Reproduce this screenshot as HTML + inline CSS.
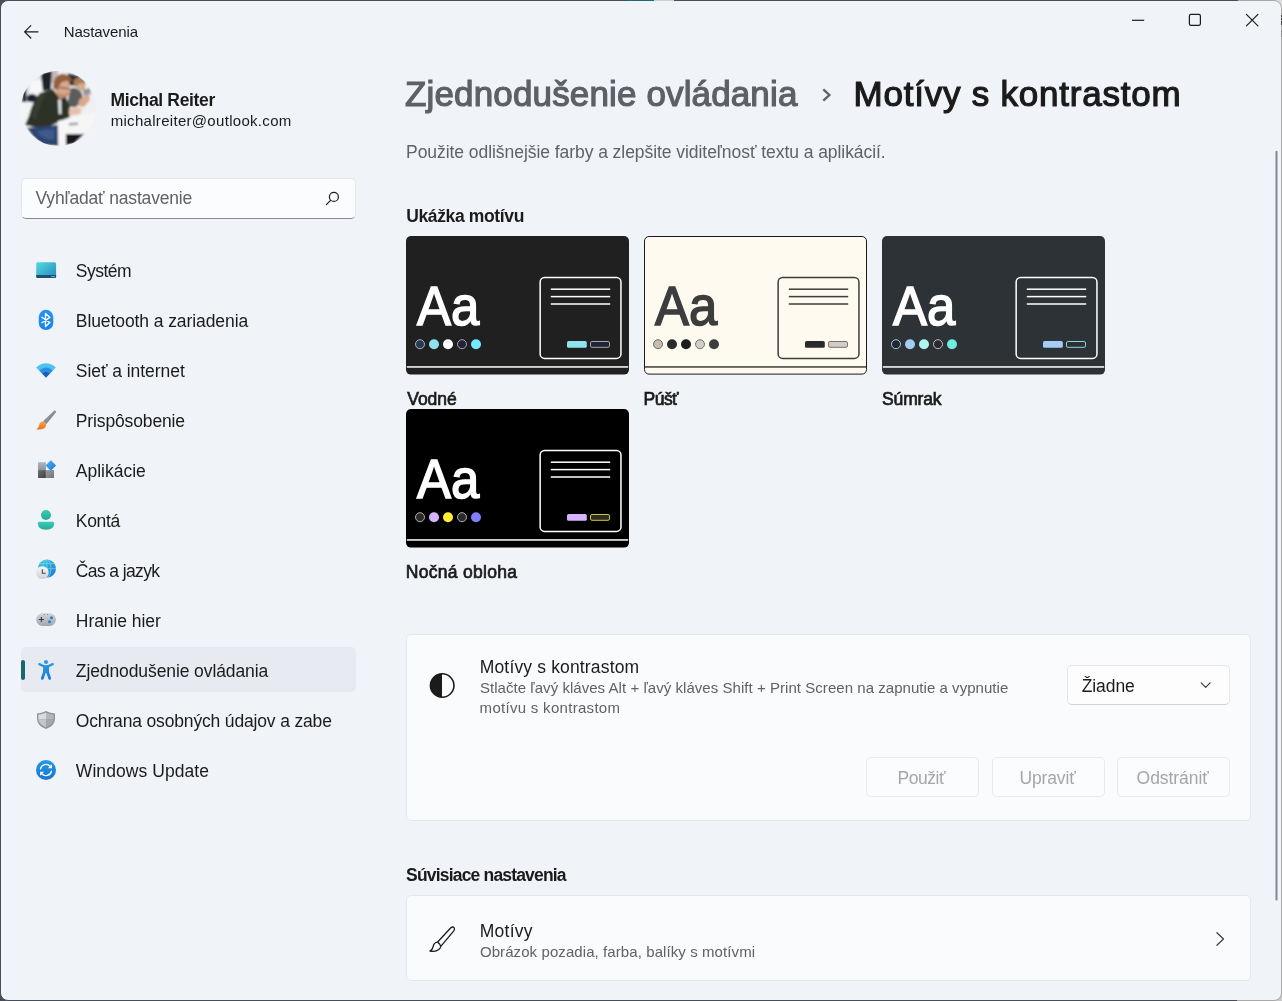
<!DOCTYPE html>
<html lang="sk"><head><meta charset="utf-8"><title>Nastavenia</title>
<style>
html,body{margin:0;padding:0;}
body{width:1282px;height:1001px;overflow:hidden;background:#474d59;position:relative;font-family:"Liberation Sans",sans-serif;}
.win{position:absolute;left:0;top:0;width:1280px;height:999px;border:1px solid #474d59;border-radius:8px;background:#f0f3f8;}
#root{position:absolute;left:0;top:0;width:1282px;height:1001px;will-change:transform;}
.t{position:absolute;white-space:nowrap;line-height:1;display:block;}
.a{position:absolute;display:block;}
.card{position:absolute;box-sizing:border-box;background:#fafbfd;border:1px solid #e4e7ec;border-radius:5px;}
.btn{position:absolute;box-sizing:border-box;background:#fbfcfd;border:1px solid #e8eaed;border-radius:5px;}
svg{position:absolute;overflow:visible;}
</style></head><body>
<div class="a" style="left:1272px;top:0;width:10px;height:10px;background:#dcdcdc"></div>
<div class="a" style="left:1272px;top:991px;width:10px;height:10px;background:#c9c9c9"></div>
<div class="win" style="clip-path:inset(0 22px 0 0)"></div>
<div class="win" style="border-color:#a9a9a9;clip-path:inset(0 0 0 1260px)"></div>
<div class="a" style="left:1238px;top:0;width:23px;height:1px;background:#a9a9a9"></div>
<div class="a" style="left:627px;top:0;width:27px;height:1px;background:#1d6a77"></div>
<div class="a" style="left:654px;top:0;width:20px;height:1px;background:#cfcfcf"></div>
<div class="a" style="left:1237px;top:1000px;width:24px;height:1px;background:#a9a9a9"></div>
<div class="a" style="left:1281px;top:15px;width:1px;height:2px;background:#3a3a3a"></div>
<div class="a" style="left:1281px;top:18px;width:1px;height:2px;background:#3a3a3a"></div>
<div class="a" style="left:1281px;top:21px;width:1px;height:4px;background:#3a3a3a"></div>
<div class="a" style="left:1281px;top:30px;width:1px;height:7px;background:#8a8a8a"></div>
<div id="root">
<svg style="left:20px;top:20px" width="24" height="24" viewBox="20 20 24 24"><path d="M38 31.8H24.6M30.8 25.6L24.6 31.8L30.8 38" fill="none" stroke="#1b1b1b" stroke-width="1.2" stroke-linecap="round" stroke-linejoin="round"/></svg>
<span class="t" style="left:63.65px;top:24.00px;font-size:15px;color:#1b1b1b;letter-spacing:-0.057px;">Nastavenia</span>
<svg style="left:1120px;top:8px" width="150" height="24" viewBox="1120 8 150 24" fill="none" stroke="#1b1b1b" stroke-width="1.2">
<path d="M1132 20.3H1144.2"/>
<rect x="1189.4" y="14.4" width="11" height="11" rx="1.6"/>
<path d="M1246.4 14.3L1257.9 25.8M1257.9 14.3L1246.4 25.8" stroke-linecap="round"/>
</svg>
<svg style="left:10px;top:60px" width="100" height="100" viewBox="0 0 1001 1001">
<defs><clipPath id="av"><circle cx="485" cy="484" r="377"/></clipPath>
<filter id="bl" x="-5%" y="-5%" width="110%" height="110%"><feGaussianBlur stdDeviation="9"/></filter></defs>
<g clip-path="url(#av)"><g filter="url(#bl)">
<rect x="80" y="80" width="820" height="820" fill="#eef0f3"/>
<rect x="100" y="100" width="250" height="330" fill="#e3e6ea"/>
<rect x="200" y="200" width="130" height="200" fill="#f7f7f7"/>
<path d="M310 150Q330 110 420 110L410 300L330 310Z" fill="#1d212b"/>
<rect x="420" y="100" width="60" height="130" fill="#c9b9b6"/>
<path d="M120 300L165 280L165 420L120 420Z" fill="#20242c"/>
<ellipse cx="220" cy="385" rx="52" ry="45" fill="#1b2030"/>
<path d="M100 440Q180 410 260 425L200 640L100 640Z" fill="#f3f4f6"/>
<path d="M580 130L700 160L640 260L590 250Z" fill="#2a2d35"/>
<ellipse cx="695" cy="225" rx="60" ry="52" fill="#a87d58"/>
<ellipse cx="715" cy="270" rx="40" ry="40" fill="#d8ab8c"/>
<path d="M600 290Q650 250 720 330L730 400L660 470L570 470Z" fill="#5b5b5e"/>
<path d="M730 300L800 280L810 340L740 360Z" fill="#8d939e"/>
<path d="M690 400L790 330L800 400L740 470L680 460Z" fill="#d9a98a"/>
<path d="M450 250Q470 170 570 195Q615 240 600 320Q585 385 510 385Q445 345 450 250Z" fill="#dba789"/>
<path d="M470 320Q520 360 590 330Q580 385 510 388Q470 365 470 320Z" fill="#c48a6c"/>
<path d="M432 285Q425 180 500 142Q580 118 622 205L598 218Q545 198 505 232L482 300Z" fill="#93603d"/>
<path d="M500 268L597 282L594 295L500 283Z" fill="#6b5a66"/>
<path d="M430 290L300 330Q230 400 190 560L150 650L340 690L600 570L590 520L600 470L560 370L500 390Z" fill="#2d3228"/>
<path d="M300 340Q250 420 215 560L260 600Q290 450 360 350Z" fill="#383e31"/>
<path d="M482 395L512 395L515 540L488 540Z" fill="#e9edf2"/>
<path d="M590 500Q650 450 720 490L700 540L600 555Z" fill="#e6bfa8"/>
<path d="M170 680L480 650L485 860L330 850Q220 770 170 680Z" fill="#2c456e"/>
<path d="M260 720Q360 680 450 700L440 800Q340 800 260 720Z" fill="#3c5a8a"/>
<path d="M480 610L860 520L870 700L800 720L560 740L540 870L485 860Z" fill="#f6f6f6"/>
<path d="M560 740L740 740L640 840L560 850Z" fill="#14161b"/>
<path d="M590 630L680 625L680 650L590 655Z" fill="#9a9da2"/>
</g></g></svg>
<span class="t" style="left:110.51px;top:92.00px;font-size:17.5px;color:#1b1b1b;letter-spacing:-0.350px;font-weight:700;">Michal Reiter</span>
<span class="t" style="left:110.70px;top:113.00px;font-size:15px;color:#1b1b1b;letter-spacing:0.303px;">michalreiter@outlook.com</span>
<div class="a" style="left:21px;top:178px;width:335px;height:41px;box-sizing:border-box;background:#fbfcfe;border:1px solid #e3e6eb;border-bottom:1.5px solid #85888e;border-radius:5px;"></div>
<span class="t" style="left:35.44px;top:190.00px;font-size:17.5px;color:#5f6266;letter-spacing:-0.167px;">Vyhľadať nastavenie</span>
<svg style="left:323px;top:188px" width="20" height="20" viewBox="323 188 20 20" fill="none" stroke="#1b1b1b" stroke-width="1.2" stroke-linecap="round"><circle cx="333.9" cy="196.9" r="4.5"/><path d="M330.6 200.3L326.3 204.6"/></svg>
<div class="a" style="left:21px;top:647px;width:335px;height:45px;border-radius:5px;background:#e7eaf0"></div>
<div class="a" style="left:21px;top:660px;width:4px;height:20px;border-radius:2px;background:#1b6472"></div>
<span class="t" style="left:75.80px;top:263.00px;font-size:17.5px;color:#1b1b1b;letter-spacing:-0.497px;">Systém</span>
<span class="t" style="left:75.80px;top:313.00px;font-size:17.5px;color:#1b1b1b;letter-spacing:-0.085px;">Bluetooth a zariadenia</span>
<span class="t" style="left:75.80px;top:363.00px;font-size:17.5px;color:#1b1b1b;letter-spacing:-0.047px;">Sieť a internet</span>
<span class="t" style="left:75.80px;top:413.00px;font-size:17.5px;color:#1b1b1b;letter-spacing:-0.135px;">Prispôsobenie</span>
<span class="t" style="left:75.80px;top:463.00px;font-size:17.5px;color:#1b1b1b;letter-spacing:-0.006px;">Aplikácie</span>
<span class="t" style="left:75.80px;top:513.00px;font-size:17.5px;color:#1b1b1b;letter-spacing:-0.337px;">Kontá</span>
<span class="t" style="left:75.80px;top:563.00px;font-size:17.5px;color:#1b1b1b;letter-spacing:-0.624px;">Čas a jazyk</span>
<span class="t" style="left:75.80px;top:613.00px;font-size:17.5px;color:#1b1b1b;letter-spacing:-0.051px;">Hranie hier</span>
<span class="t" style="left:75.80px;top:663.00px;font-size:17.5px;color:#1b1b1b;letter-spacing:-0.097px;">Zjednodušenie ovládania</span>
<span class="t" style="left:75.80px;top:713.00px;font-size:17.5px;color:#1b1b1b;letter-spacing:-0.160px;">Ochrana osobných údajov a zabe</span>
<span class="t" style="left:75.80px;top:763.00px;font-size:17.5px;color:#1b1b1b;letter-spacing:0.069px;">Windows Update</span>
<svg style="left:34px;top:258px" width="24" height="24" viewBox="0 0 24 24"><defs><linearGradient id="gs" x1="0" y1="0" x2="1" y2="1"><stop offset="0" stop-color="#52dce0"/><stop offset="1" stop-color="#2787bd"/></linearGradient></defs><rect x="2.2" y="4.2" width="19.9" height="15.8" rx="1.6" fill="url(#gs)"/><path d="M2.2 16.9H22.1V18.4Q22.1 20 20.5 20H3.8Q2.2 20 2.2 18.4Z" fill="#1b5272"/><rect x="17.4" y="18" width="1.1" height="1.1" fill="#b5e8f2"/><rect x="19.4" y="18" width="1.1" height="1.1" fill="#b5e8f2"/></svg>
<svg style="left:34px;top:308px" width="24" height="24" viewBox="0 0 24 24"><defs><linearGradient id="gb" x1="0" y1="0" x2="0" y2="1"><stop offset="0" stop-color="#2593f8"/><stop offset="1" stop-color="#1783f1"/></linearGradient></defs><rect x="4.75" y="1.8" width="14.55" height="20.25" rx="7.27" fill="url(#gb)"/><path d="M7.9 9.3L15.9 14.6L11.5 18.5V5.5L15.9 9.4L7.9 14.7" fill="none" stroke="#fff" stroke-width="1.35" stroke-linejoin="round" stroke-linecap="round"/></svg>
<svg style="left:34px;top:358px" width="24" height="24" viewBox="0 0 24 24"><path d="M12 19.4L2.2 9.4Q12 1 21.8 9.4Z" fill="#4cc2f1"/><path d="M12 19.4L5.2 12.5Q12 6.6 18.8 12.5Z" fill="#2d8fe3"/><path d="M12 19.4L8.2 15.5Q12 12.2 15.8 15.5Z" fill="#1a5fb4"/></svg>
<svg style="left:34px;top:408px" width="24" height="24" viewBox="0 0 24 24"><defs><linearGradient id="gp" x1="0" y1="0" x2="1" y2="1"><stop offset="0" stop-color="#a4a8ae"/><stop offset="1" stop-color="#6f737a"/></linearGradient><linearGradient id="gp2" x1="0" y1="0" x2="0" y2="1"><stop offset="0" stop-color="#f9a23a"/><stop offset="1" stop-color="#f0702a"/></linearGradient></defs><path d="M20.6 2.2Q22.4 2.6 21.8 4.4L12.2 16.2L9 13.2Z" fill="url(#gp)"/><path d="M9.2 13.2L12.2 16.2Q12 20.6 7.4 21.2Q4.4 21.8 2.2 21.2Q4.6 19.8 5 17.4Q5.6 13.8 9.2 13.2Z" fill="url(#gp2)"/></svg>
<svg style="left:34px;top:458px" width="24" height="24" viewBox="0 0 24 24"><defs><linearGradient id="ga" x1="0" y1="0" x2="1" y2="1"><stop offset="0" stop-color="#45b6fa"/><stop offset="1" stop-color="#1677d8"/></linearGradient><linearGradient id="ga1" x1="0" y1="0" x2="0" y2="1"><stop offset="0" stop-color="#b4b7bc"/><stop offset="1" stop-color="#8e9196"/></linearGradient><linearGradient id="ga2" x1="0" y1="0" x2="1" y2="1"><stop offset="0" stop-color="#6a6d72"/><stop offset="1" stop-color="#3f4246"/></linearGradient><linearGradient id="ga3" x1="0" y1="0" x2="1" y2="1"><stop offset="0" stop-color="#9a9da2"/><stop offset="1" stop-color="#6f7277"/></linearGradient></defs><rect x="4" y="4.2" width="7.9" height="7.9" fill="url(#ga1)"/><rect x="4" y="12.1" width="7.9" height="7.9" fill="url(#ga2)"/><rect x="11.9" y="12.1" width="8.1" height="7.9" fill="url(#ga3)"/><path d="M16.8 2.2L22.1 7.5L16.8 12.8L11.5 7.5Z" fill="url(#ga)"/></svg>
<svg style="left:34px;top:508px" width="24" height="24" viewBox="0 0 24 24"><defs><linearGradient id="gk" x1="0" y1="0" x2="0" y2="1"><stop offset="0" stop-color="#3ccbb3"/><stop offset="1" stop-color="#22aa9a"/></linearGradient></defs><circle cx="12" cy="7" r="5" fill="url(#gk)"/><path d="M5.4 13.7H18.6Q20.2 13.7 20.2 15.3Q20.2 21.8 12 21.8Q3.8 21.8 3.8 15.3Q3.8 13.7 5.4 13.7Z" fill="url(#gk)"/></svg>
<svg style="left:34px;top:558px" width="24" height="24" viewBox="0 0 24 24"><defs><linearGradient id="gt" x1="0" y1="0" x2="1" y2="1"><stop offset="0" stop-color="#3fd3e0"/><stop offset="1" stop-color="#1a70d2"/></linearGradient><linearGradient id="gt2" x1="0" y1="0" x2="0" y2="1"><stop offset="0" stop-color="#f7f7f7"/><stop offset="1" stop-color="#cfd0d2"/></linearGradient></defs><circle cx="12.9" cy="10.65" r="9.1" fill="url(#gt)"/><g fill="none" stroke="#7fe0ee" stroke-width=".8" opacity=".75"><ellipse cx="12.9" cy="10.65" rx="4" ry="9.1"/><path d="M3.8 10.65H22M5.4 5.6H20.4M12.9 1.6V19.6"/></g><circle cx="8.35" cy="14.6" r="6.4" fill="url(#gt2)"/><path d="M8.35 11.2V15.2H11.6" fill="none" stroke="#4a4a4c" stroke-width="1.1"/></svg>
<svg style="left:34px;top:608px" width="24" height="24" viewBox="0 0 24 24"><defs><linearGradient id="gg" x1="0" y1="0" x2="0" y2="1"><stop offset="0" stop-color="#d2d5d9"/><stop offset="1" stop-color="#a3a7ad"/></linearGradient></defs><rect x="2.1" y="5.3" width="19.9" height="12.6" rx="6.3" fill="url(#gg)"/><path d="M4.8 11.5H10M7.4 8.9V14.1" stroke="#3f4246" stroke-width="1.15" fill="none"/><circle cx="17.5" cy="9.7" r="1.5" fill="#1f7fe0"/><circle cx="15.5" cy="13.7" r="1.5" fill="#1f7fe0"/><circle cx="10.6" cy="6.5" r=".45" fill="#55585d"/><circle cx="13.6" cy="6.5" r=".45" fill="#55585d"/></svg>
<svg style="left:34px;top:658px" width="24" height="24" viewBox="0 0 24 24"><defs><linearGradient id="gx" gradientUnits="userSpaceOnUse" x1="0" y1="2" x2="0" y2="22"><stop offset="0" stop-color="#2f9fe4"/><stop offset="1" stop-color="#167ad6"/></linearGradient></defs><g fill="url(#gx)" stroke="url(#gx)"><circle cx="12" cy="4" r="2.1" stroke="none"/><path d="M5.3 6.1L9.9 8.3H14.1L18.7 6.1" fill="none" stroke-width="2.3" stroke-linecap="round" stroke-linejoin="round"/><rect x="9.1" y="7.3" width="6" height="7.6" stroke="none"/><path d="M10.5 14L8.3 20.4M13.5 14L15.7 20.4" fill="none" stroke-width="2.8" stroke-linecap="round"/></g></svg>
<svg style="left:34px;top:708px" width="24" height="24" viewBox="0 0 24 24"><path d="M12 3Q16 5.3 21 5.6V10.4Q21 17.6 12 21Q3 17.6 3 10.4V5.6Q8 5.3 12 3Z" fill="#8e9297"/><path d="M12 4.5Q15.6 6.5 19.7 6.8V11.6H12Z" fill="#b3b6ba"/><path d="M12 4.5Q8.4 6.5 4.3 6.8V11.6H12Z" fill="#d9dbdd"/><path d="M4.3 11.6H12V19.5Q5 16.6 4.3 11.6Z" fill="#c3c5c8"/><path d="M19.7 11.6H12V19.5Q19 16.6 19.7 11.6Z" fill="#a4a7ac"/></svg>
<svg style="left:34px;top:758px" width="24" height="24" viewBox="0 0 24 24"><defs><linearGradient id="gu" x1="0" y1="0" x2="0" y2="1"><stop offset="0" stop-color="#2398e6"/><stop offset="1" stop-color="#1676d0"/></linearGradient></defs><circle cx="12" cy="12" r="10" fill="url(#gu)"/><g fill="none" stroke="#fff" stroke-width="1.35" stroke-linecap="round"><path d="M6.5 10.9A5.6 5.6 0 0 1 16.3 8.4"/><path d="M17.5 13.1A5.6 5.6 0 0 1 7.7 15.6"/></g><path d="M17.9 6.3V10.3H13.9Z" fill="#fff"/><path d="M6.1 17.7V13.7H10.1Z" fill="#fff"/></svg>
<span class="t" style="left:405.08px;top:76.00px;font-size:35px;color:#5d6065;letter-spacing:0.140px;-webkit-text-stroke:1.2px #5d6065;">Zjednodušenie ovládania</span>
<svg style="left:818px;top:84px" width="20" height="24" viewBox="818 84 20 24"><path d="M823.3 89.3L829.4 95L823.3 100.7" fill="none" stroke="#5d6065" stroke-width="2.3" stroke-linecap="butt" stroke-linejoin="miter"/></svg>
<span class="t" style="left:853.52px;top:76.00px;font-size:35px;color:#1b1b1b;letter-spacing:0.772px;-webkit-text-stroke:1.2px #1b1b1b;">Motívy s kontrastom</span>
<span class="t" style="left:406.06px;top:144.00px;font-size:17.5px;color:#5f6266;letter-spacing:-0.057px;">Použite odlišnejšie farby a zlepšite viditeľnosť textu a aplikácií.</span>
<span class="t" style="left:406.14px;top:208.00px;font-size:17.5px;color:#1b1b1b;letter-spacing:-0.356px;font-weight:700;">Ukážka motívu</span>
<svg style="left:406px;top:236px" width="223" height="139" viewBox="0 0 223 139"><rect x="0" y="0" width="223" height="138.6" rx="5" fill="#202020"/><rect x="0.8" y="130.2" width="221.4" height="1.5" fill="#ffffff"/><rect x="134.15" y="41.5" width="80.8" height="80.9" rx="4.5" fill="none" stroke="#ffffff" stroke-width="1.5"/><rect x="144.8" y="52.45" width="59.4" height="1.5" fill="#ffffff"/><rect x="144.8" y="59.85" width="59.4" height="1.5" fill="#ffffff"/><rect x="144.8" y="67.25" width="59.4" height="1.5" fill="#ffffff"/><rect x="161" y="105" width="19.8" height="6.8" rx="1.6" fill="#8ee3f0"/><rect x="184.5" y="105.5" width="19" height="5.8" rx="1.4" fill="#22223a" stroke="#a6a6b0" stroke-width="1"/><circle cx="14" cy="108.2" r="4.5" fill="#263b50" stroke="#a9b3bd" stroke-width="1"/><circle cx="28" cy="108.2" r="5" fill="#8ee3f0"/><circle cx="42" cy="108.2" r="5" fill="#ffffff"/><circle cx="56" cy="108.2" r="4.5" fill="#22223a" stroke="#a6a6b0" stroke-width="1"/><circle cx="70" cy="108.2" r="5" fill="#75e9fc"/></svg>
<span class="t" style="left:416.61px;top:278.00px;font-size:56px;color:#ffffff;-webkit-text-stroke:1.6px #ffffff;transform:scaleX(0.9089);transform-origin:0 0;">Aa</span>
<svg style="left:644px;top:236px" width="223" height="139" viewBox="0 0 223 139"><rect x="0.5" y="0.5" width="222" height="137.6" rx="4.5" fill="#fffaef" stroke="#1b1b1b" stroke-width="1"/><rect x="0.8" y="130.2" width="221.4" height="1.5" fill="#3d3d3d"/><rect x="134.15" y="41.5" width="80.8" height="80.9" rx="4.5" fill="none" stroke="#3d3d3d" stroke-width="1.5"/><rect x="144.8" y="52.45" width="59.4" height="1.5" fill="#3d3d3d"/><rect x="144.8" y="59.85" width="59.4" height="1.5" fill="#3d3d3d"/><rect x="144.8" y="67.25" width="59.4" height="1.5" fill="#3d3d3d"/><rect x="161" y="105" width="19.8" height="6.8" rx="1.6" fill="#2b2b2b"/><rect x="184.5" y="105.5" width="19" height="5.8" rx="1.4" fill="#d2cbc9" stroke="#77736f" stroke-width="1"/><circle cx="14" cy="108.2" r="4.5" fill="#c4bdb2" stroke="#6d6a66" stroke-width="1"/><circle cx="28" cy="108.2" r="5" fill="#2b2b2b"/><circle cx="42" cy="108.2" r="5" fill="#1c1c1c"/><circle cx="56" cy="108.2" r="4.5" fill="#d2cbc9" stroke="#77736f" stroke-width="1"/><circle cx="70" cy="108.2" r="5" fill="#3d3d3d"/></svg>
<span class="t" style="left:654.61px;top:278.00px;font-size:56px;color:#3d3d3d;-webkit-text-stroke:1.6px #3d3d3d;transform:scaleX(0.9089);transform-origin:0 0;">Aa</span>
<svg style="left:882px;top:236px" width="223" height="139" viewBox="0 0 223 139"><rect x="0" y="0" width="223" height="138.6" rx="5" fill="#2d3236"/><rect x="0.8" y="130.2" width="221.4" height="1.5" fill="#ffffff"/><rect x="134.15" y="41.5" width="80.8" height="80.9" rx="4.5" fill="none" stroke="#ffffff" stroke-width="1.5"/><rect x="144.8" y="52.45" width="59.4" height="1.5" fill="#ffffff"/><rect x="144.8" y="59.85" width="59.4" height="1.5" fill="#ffffff"/><rect x="144.8" y="67.25" width="59.4" height="1.5" fill="#ffffff"/><rect x="161" y="105" width="19.8" height="6.8" rx="1.6" fill="#a6cbf5"/><rect x="184.5" y="105.5" width="19" height="5.8" rx="1.4" fill="#2b2f33" stroke="#8fd9d0" stroke-width="1"/><circle cx="14" cy="108.2" r="4.5" fill="#1b2736" stroke="#b9c0c8" stroke-width="1"/><circle cx="28" cy="108.2" r="5" fill="#a6cbf5"/><circle cx="42" cy="108.2" r="5" fill="#b0f5ee"/><circle cx="56" cy="108.2" r="4.5" fill="#2b2b2b" stroke="#b9c0c8" stroke-width="1"/><circle cx="70" cy="108.2" r="5" fill="#70ebde"/></svg>
<span class="t" style="left:892.61px;top:278.00px;font-size:56px;color:#ffffff;-webkit-text-stroke:1.6px #ffffff;transform:scaleX(0.9089);transform-origin:0 0;">Aa</span>
<svg style="left:406px;top:409px" width="223" height="139" viewBox="0 0 223 139"><rect x="0" y="0" width="223" height="138.6" rx="5" fill="#000000"/><rect x="0.8" y="130.2" width="221.4" height="1.5" fill="#ffffff"/><rect x="134.15" y="41.5" width="80.8" height="80.9" rx="4.5" fill="none" stroke="#ffffff" stroke-width="1.5"/><rect x="144.8" y="52.45" width="59.4" height="1.5" fill="#ffffff"/><rect x="144.8" y="59.85" width="59.4" height="1.5" fill="#ffffff"/><rect x="144.8" y="67.25" width="59.4" height="1.5" fill="#ffffff"/><rect x="161" y="105" width="19.8" height="6.8" rx="1.6" fill="#d6b4fd"/><rect x="184.5" y="105.5" width="19" height="5.8" rx="1.4" fill="#2b2b2b" stroke="#d8c930" stroke-width="1"/><circle cx="14" cy="108.2" r="4.5" fill="#2b2b2b" stroke="#b0b0b0" stroke-width="1"/><circle cx="28" cy="108.2" r="5" fill="#d6b4fd"/><circle cx="42" cy="108.2" r="5" fill="#ffee32"/><circle cx="56" cy="108.2" r="4.5" fill="#2b2b2b" stroke="#b0b0b0" stroke-width="1"/><circle cx="70" cy="108.2" r="5" fill="#8080ff"/></svg>
<span class="t" style="left:416.61px;top:451.00px;font-size:56px;color:#ffffff;-webkit-text-stroke:1.6px #ffffff;transform:scaleX(0.9089);transform-origin:0 0;">Aa</span>
<span class="t" style="left:407.29px;top:391.00px;font-size:17.5px;color:#1b1b1b;letter-spacing:-0.063px;-webkit-text-stroke:0.7px #1b1b1b;">Vodné</span>
<span class="t" style="left:643.61px;top:391.00px;font-size:17.5px;color:#1b1b1b;letter-spacing:-0.558px;-webkit-text-stroke:0.7px #1b1b1b;">Púšť</span>
<span class="t" style="left:882.04px;top:391.00px;font-size:17.5px;color:#1b1b1b;letter-spacing:-0.140px;-webkit-text-stroke:0.7px #1b1b1b;">Súmrak</span>
<span class="t" style="left:405.81px;top:564.00px;font-size:17.5px;color:#1b1b1b;letter-spacing:0.285px;-webkit-text-stroke:0.7px #1b1b1b;">Nočná obloha</span>
<div class="card" style="left:406px;top:634px;width:845px;height:187px"></div>
<svg style="left:428px;top:671px" width="28" height="28" viewBox="428 671 28 28"><circle cx="442.2" cy="685.5" r="11.75" fill="none" stroke="#1b1b1b" stroke-width="1.6"/><path d="M442 673.75A11.75 11.75 0 0 0 442 697.25Z" fill="#1b1b1b"/></svg>
<span class="t" style="left:479.76px;top:659.00px;font-size:17.5px;color:#1b1b1b;letter-spacing:0.156px;">Motívy s kontrastom</span>
<span class="t" style="left:479.91px;top:680.00px;font-size:15px;color:#5f6266;letter-spacing:0.044px;">Stlačte ľavý kláves Alt + ľavý kláves Shift + Print Screen na zapnutie a vypnutie</span>
<span class="t" style="left:479.60px;top:700.00px;font-size:15px;color:#5f6266;letter-spacing:0.297px;">motívu s kontrastom</span>
<div class="a" style="left:1067px;top:665px;width:163px;height:40px;box-sizing:border-box;background:#fdfdfe;border:1px solid #e3e6ea;border-bottom-color:#cfd2d7;border-radius:5px;"></div>
<span class="t" style="left:1081.64px;top:678.00px;font-size:17.5px;color:#1b1b1b;letter-spacing:-0.065px;">Žiadne</span>
<svg style="left:1196px;top:678px" width="20" height="16" viewBox="1196 678 20 16"><path d="M1201.2 682.9L1205.65 687.4L1210.1 682.9" fill="none" stroke="#3a3c40" stroke-width="1.2" stroke-linecap="round" stroke-linejoin="round"/></svg>
<div class="btn" style="left:866px;top:757px;width:113px;height:40px"></div>
<span class="t" style="left:897.56px;top:770.00px;font-size:17.5px;color:#a3a6ab;letter-spacing:-0.460px;">Použiť</span>
<div class="btn" style="left:992px;top:757px;width:113px;height:40px"></div>
<span class="t" style="left:1019.42px;top:770.00px;font-size:17.5px;color:#a3a6ab;letter-spacing:-0.129px;">Upraviť</span>
<div class="btn" style="left:1117px;top:757px;width:113px;height:40px"></div>
<span class="t" style="left:1136.59px;top:770.00px;font-size:17.5px;color:#a3a6ab;letter-spacing:-0.062px;">Odstrániť</span>
<span class="t" style="left:406.10px;top:867.00px;font-size:17.5px;color:#1b1b1b;letter-spacing:-0.820px;font-weight:700;">Súvisiace nastavenia</span>
<div class="card" style="left:406px;top:895px;width:845px;height:86px"></div>
<svg style="left:428px;top:924px" width="28" height="28" viewBox="428 924 28 28" fill="none" stroke="#1b1b1b" stroke-width="1.3" stroke-linejoin="round"><path d="M437.4 942.2L450.6 928Q452.6 926.2 454 927.6Q455.2 929 453.8 930.8L440.8 946.4"/><path d="M437.4 942.2Q434 942.6 433.2 946.4Q432.6 949.6 429.9 951Q435.6 952.2 438.8 949.6Q440.6 948 440.8 946.4"/><path d="M437.4 942.2Q439.8 943.4 440.8 946.4"/></svg>
<span class="t" style="left:479.76px;top:923.00px;font-size:17.5px;color:#1b1b1b;letter-spacing:0.248px;">Motívy</span>
<span class="t" style="left:479.91px;top:944.00px;font-size:15px;color:#5f6266;letter-spacing:0.086px;">Obrázok pozadia, farba, balíky s motívmi</span>
<svg style="left:1210px;top:928px" width="20" height="20" viewBox="1210 928 20 20"><path d="M1216.9 932.7L1223.5 939L1216.9 945.3" fill="none" stroke="#3a3c40" stroke-width="1.2" stroke-linecap="round" stroke-linejoin="round"/></svg>
<svg style="left:1270px;top:145px" width="12" height="762" viewBox="1270 145 12 762"><rect x="1275.5" y="150.8" width="2" height="749.8" rx="1" fill="#84878d"/></svg>
</div></body></html>
